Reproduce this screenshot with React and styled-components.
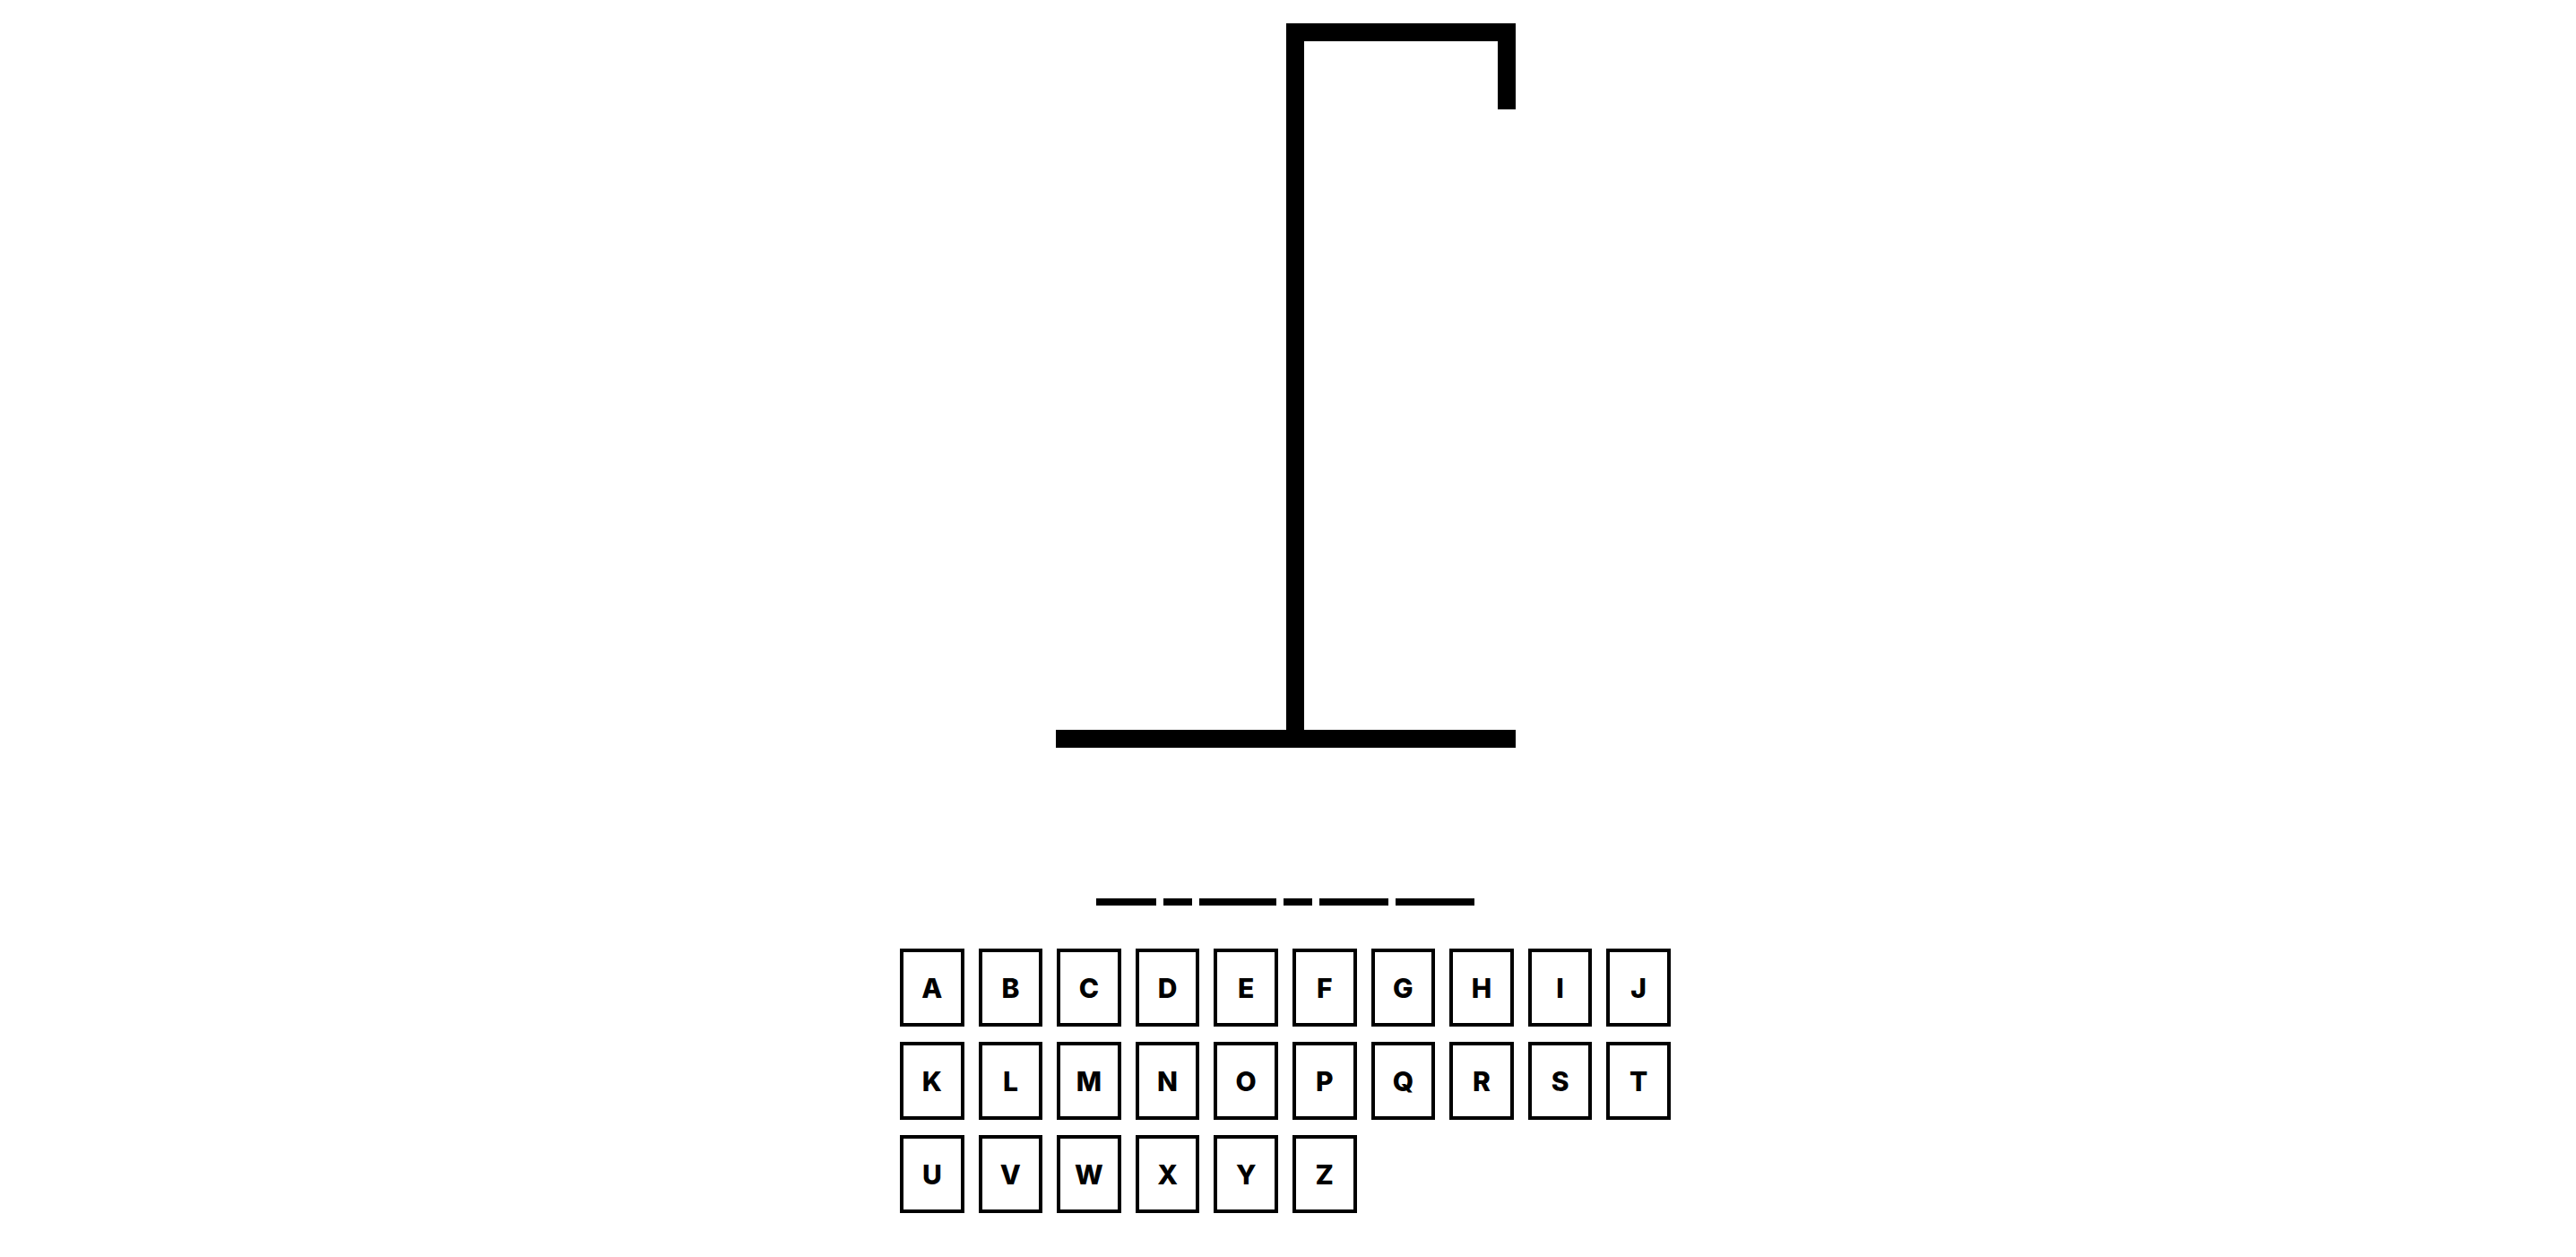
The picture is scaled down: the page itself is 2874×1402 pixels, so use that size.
import React from "react";
import styled, { createGlobalStyle } from "styled-components";

const GlobalStyle = createGlobalStyle`
  html, body {
    margin: 0;
    padding: 0;
    background: #fff;
    font-family: Inter, "Noto Sans", "Liberation Sans", sans-serif;
  }
`;

const Page = styled.main`
  display: flex;
  flex-direction: column;
  align-items: center;
  padding: 26px 6px 0 0;
`;

const Drawing = styled.svg`
  display: block;
  width: 513px;
  height: 808px;
`;

const Word = styled.div`
  display: flex;
  gap: 8px;
  margin-top: 168px;
`;

const Blank = styled.span`
  display: block;
  width: ${(p) => p.$w}px;
  height: 8px;
  background: #000;
`;

const Keyboard = styled.div`
  display: grid;
  grid-template-columns: repeat(10, 1fr);
  column-gap: 16px;
  row-gap: 17px;
  width: 860px;
  margin-top: 48px;
`;

const Key = styled.button`
  height: 87px;
  padding: 0;
  border: 4px solid #000;
  background: #fff;
  color: #000;
  font-family: Inter, "Noto Sans", "Liberation Sans", sans-serif;
  font-size: 30px;
  font-weight: 800;
  cursor: pointer;
`;

const blanks = [67, 32, 86, 32, 77, 88];
const letters = "ABCDEFGHIJKLMNOPQRSTUVWXYZ".split("");

function Gallows() {
  return (
    <Drawing viewBox="0 0 513 808">
      <rect x="257" y="0" width="256" height="20" fill="#000" />
      <rect x="493" y="20" width="20" height="76" fill="#000" />
      <rect x="257" y="0" width="20" height="788" fill="#000" />
      <rect x="0" y="788" width="513" height="20" fill="#000" />
    </Drawing>
  );
}

export default function App() {
  return (
    <>
      <GlobalStyle />
      <Page>
        <Gallows />
        <Word>
          {blanks.map((w, i) => (
            <Blank key={i} $w={w} />
          ))}
        </Word>
        <Keyboard>
          {letters.map((l) => (
            <Key key={l}>{l}</Key>
          ))}
        </Keyboard>
      </Page>
    </>
  );
}
